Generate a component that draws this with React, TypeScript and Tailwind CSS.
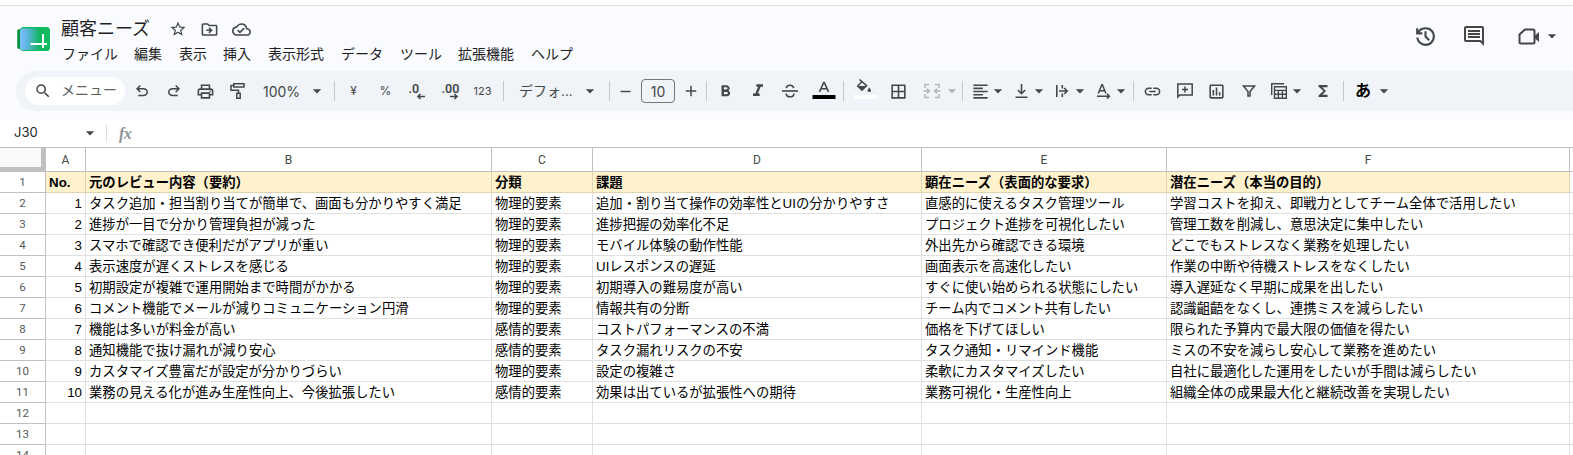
import React from "react";
import {
  MdStarBorder, MdOutlineDriveFileMove, MdOutlineCloudDone, MdOutlineComment, MdSearch,
  MdOutlinePrint, MdArrowDropDown, MdFormatBold, MdFormatItalic, MdBorderAll,
  MdFormatAlignLeft, MdLink, MdOutlineInsertChart,
  MdFunctions, MdRemove, MdAdd,
} from "react-icons/md";

const menus = [
  ["ファイル", "w-[72px]"], ["編集", "w-[45px]"], ["表示", "w-[44px]"], ["挿入", "w-[45px]"], ["表示形式", "w-[73px]"],
  ["データ", "w-[59px]"], ["ツール", "w-[58px]"], ["拡張機能", "w-[73px]"], ["ヘルプ", "w-[60px]"],
];

const columns = [
  ["A", "w-[40px]"], ["B", "w-[406px]"], ["C", "w-[101px]"], ["D", "w-[329px]"], ["E", "w-[245px]"], ["F", "w-[403px]"], ["", "w-[40px]"],
];

const rows: string[][] = [
  ["No.", "元のレビュー内容（要約）", "分類", "課題", "顕在ニーズ（表面的な要求）", "潜在ニーズ（本当の目的）"],
  ["1", "タスク追加・担当割り当てが簡単で、画面も分かりやすく満足", "物理的要素", "追加・割り当て操作の効率性とUIの分かりやすさ", "直感的に使えるタスク管理ツール", "学習コストを抑え、即戦力としてチーム全体で活用したい"],
  ["2", "進捗が一目で分かり管理負担が減った", "物理的要素", "進捗把握の効率化不足", "プロジェクト進捗を可視化したい", "管理工数を削減し、意思決定に集中したい"],
  ["3", "スマホで確認でき便利だがアプリが重い", "物理的要素", "モバイル体験の動作性能", "外出先から確認できる環境", "どこでもストレスなく業務を処理したい"],
  ["4", "表示速度が遅くストレスを感じる", "物理的要素", "UIレスポンスの遅延", "画面表示を高速化したい", "作業の中断や待機ストレスをなくしたい"],
  ["5", "初期設定が複雑で運用開始まで時間がかかる", "物理的要素", "初期導入の難易度が高い", "すぐに使い始められる状態にしたい", "導入遅延なく早期に成果を出したい"],
  ["6", "コメント機能でメールが減りコミュニケーション円滑", "物理的要素", "情報共有の分断", "チーム内でコメント共有したい", "認識齟齬をなくし、連携ミスを減らしたい"],
  ["7", "機能は多いが料金が高い", "感情的要素", "コストパフォーマンスの不満", "価格を下げてほしい", "限られた予算内で最大限の価値を得たい"],
  ["8", "通知機能で抜け漏れが減り安心", "感情的要素", "タスク漏れリスクの不安", "タスク通知・リマインド機能", "ミスの不安を減らし安心して業務を進めたい"],
  ["9", "カスタマイズ豊富だが設定が分かりづらい", "物理的要素", "設定の複雑さ", "柔軟にカスタマイズしたい", "自社に最適化した運用をしたいが手間は減らしたい"],
  ["10", "業務の見える化が進み生産性向上、今後拡張したい", "感情的要素", "効果は出ているが拡張性への期待", "業務可視化・生産性向上", "組織全体の成果最大化と継続改善を実現したい"],
  [], [], [],
];

function Slot({ w, children }: { w: string; children?: React.ReactNode }) {
  return <div className={`flex h-10 shrink-0 items-center justify-center ${w}`}>{children}</div>;
}

function Divider() {
  return <div className="h-5 w-px shrink-0 bg-[#c7c7c7]" />;
}

function Caret({ className = "" }: { className?: string }) {
  return <MdArrowDropDown size={20} className={`shrink-0 ${className}`} />;
}

function Symbol({ d, size = 18 }: { d: string; size?: number }) {
  return (
    <svg width={size} height={size} viewBox="0 -960 960 960" fill="currentColor" className="shrink-0">
      <path d={d} />
    </svg>
  );
}

const UNDO = "M280-200v-80h284q63 0 109.5-40T720-420q0-60-46.5-100T564-560H312l104 104-56 56-200-200 200-200 56 56-104 104h252q97 0 166.5 63T800-420q0 94-69.5 157T564-200H280Z";
const REDO = "M396-200q-97 0-166.5-63T160-420q0-94 69.5-157T396-640h252L544-744l56-56 200 200-200 200-56-56 104-104H396q-63 0-109.5 40T240-420q0 60 46.5 100T396-280h284v80H396Z";
const HISTORY = "M480-120q-138 0-240.5-91.5T122-440h82q14 104 92.5 172T480-200q117 0 198.5-81.5T760-480q0-117-81.5-198.5T480-760q-69 0-129 32t-101 88h110v80H120v-240h80v94q51-64 124.5-99T480-840q75 0 140.5 28.5t114 77q48.5 48.5 77 114T840-480q0 75-28.5 140.5t-77 114q-48.5 48.5-114 77T480-120Zm112-192L440-464v-216h80v184l128 128-56 56Z";

function Logo() {
  return (
    <svg width="34" height="26" viewBox="0 0 34 26" className="shrink-0">
      <defs>
        <linearGradient id="sheet" x1="0" x2="1">
          <stop offset="0" stopColor="#7cc0ff" />
          <stop offset=".25" stopColor="#62b5e6" />
          <stop offset=".75" stopColor="#12b562" />
          <stop offset="1" stopColor="#0dbc5c" />
        </linearGradient>
      </defs>
      <rect x="0.2" y="3" width="20" height="20" rx="2.5" fill="#07933f" />
      <rect x="3" y="1" width="30" height="24" rx="3.5" fill="#0ebc5f" />
      <rect x="3" y="2.5" width="26" height="21.5" rx="3" fill="url(#sheet)" />
      <path d="M13.5 18H30M26 8V22" stroke="#fff" strokeWidth="2" fill="none" />
    </svg>
  );
}

function Header() {
  return (
    <header className="flex h-[65px] pl-[17px] text-[#444746]">
      <div className="pt-5"><Logo /></div>
      <div className="flex flex-1 flex-col pl-[10px]">
        <div className="flex h-[24px] items-center pt-[22px]">
          <span className="w-[108px] whitespace-nowrap text-[18px] leading-6 text-[#1f1f1f]">顧客ニーズ</span>
          <MdStarBorder size={18} />
          <MdOutlineDriveFileMove size={19} className="ml-[13px]" />
          <MdOutlineCloudDone size={19} className="ml-[13px]" />
        </div>
        <nav className="mt-[14px] flex pl-px text-[14px] leading-5 text-[#1f1f1f]">
          {menus.map(([label, w]) => <span key={label} className={`${w} shrink-0 whitespace-nowrap`}>{label}</span>)}
        </nav>
      </div>
      <div className="flex w-[160px] items-start pt-[18px]">
        <Symbol d={HISTORY} size={25} />
        <MdOutlineComment size={24} className="ml-[24px]" />
        <div className="ml-[32px] mt-[2px] flex items-center">
          <svg width="22" height="20" viewBox="0 0 22 20">
            <path d="M7 3.5H15Q16.5 3.5 16.5 5V16Q16.5 17.5 15 17.5H3Q1.5 17.5 1.5 16V8.5Z" fill="none" stroke="currentColor" strokeWidth="2" />
            <path d="M16.5 10L21 6V16L16.5 12Z" fill="currentColor" />
          </svg>
          <Caret className="ml-[2px]" />
        </div>
      </div>
    </header>
  );
}

function Decimal({ text, right }: { text: string; right?: boolean }) {
  return (
    <svg width="20" height="18" viewBox="0 0 20 18">
      <text x="1.5" y="10.5" fontFamily="Roboto, sans-serif" fontSize="12.5" fontWeight="600" fill="currentColor">{text}</text>
      <path d={right ? "M10 14.5H17M14.5 12L17 14.5L14.5 17" : "M18 14.5H11M13.5 12L11 14.5L13.5 17"} fill="none" stroke="currentColor" strokeWidth="1.6" />
    </svg>
  );
}

function Toolbar() {
  return (
    <div className="ml-4 flex h-10 items-center rounded-l-full bg-[#f0f4f9] pl-[9px] text-[#444746]">
      <div className="flex h-7 w-[100px] shrink-0 items-center rounded-full bg-white pl-[9px]">
        <MdSearch size={18} />
        <span className="ml-[9px] pb-[2px] text-[14px] text-[#5c5f5e]">メニュー</span>
      </div>
      <Slot w="w-[34px]"><Symbol d={UNDO} /></Slot>
      <Slot w="w-[30px]"><Symbol d={REDO} /></Slot>
      <Slot w="w-[33px]"><MdOutlinePrint size={19} /></Slot>
      <Slot w="w-[31px]">
        <svg width="18" height="18" viewBox="0 0 18 18" fill="none" stroke="currentColor" strokeWidth="1.5">
          <path d="M4.8 1.8H15V5H4.8ZM4.8 3.4H2V8.3H9.5V11M7.8 11.3H11.2V16.2H7.8Z" />
        </svg>
      </Slot>
      <div className="flex w-[81px] shrink-0 items-center pl-[9px] font-['Inter'] text-[14px]">
        <span className="w-[45px] pl-px">100%</span><Caret />
      </div>
      <Divider />
      <Slot w="w-[37px]"><span className="font-['Inter'] text-[12px]">¥</span></Slot>
      <Slot w="w-[27px]"><span className="font-['Inter'] text-[12px]">%</span></Slot>
      <Slot w="w-[35px]"><Decimal text=".0" /></Slot>
      <Slot w="w-[31px]"><Decimal text=".00" right /></Slot>
      <Slot w="w-[35px]"><span className="font-['Inter'] text-[11px]">123</span></Slot>
      <div className="ml-[3px]"><Divider /></div>
      <div className="flex w-[105px] shrink-0 items-center pl-[15px] text-[14px]">
        <span className="w-[61px] shrink-0 whitespace-nowrap">デフォ...</span><Caret />
      </div>
      <Divider />
      <Slot w="w-[31px]"><MdRemove size={17} /></Slot>
      <div className="flex h-6 w-[34px] shrink-0 items-center justify-center rounded border border-[#747775] font-['Inter'] text-[14px]">10</div>
      <Slot w="w-[31px]"><MdAdd size={18} /></Slot>
      <Divider />
      <Slot w="w-[37px]"><MdFormatBold size={19} /></Slot>
      <Slot w="w-[28px]"><MdFormatItalic size={20} /></Slot>
      <Slot w="w-[36px]">
        <svg width="18" height="18" viewBox="0 0 18 18" fill="none" stroke="currentColor" strokeWidth="1.6">
          <path d="M1 9H17" />
          <path d="M12.8 6Q12 3.2 9 3.2Q5.6 3.2 5.3 6.2M5.1 11.6Q5.6 14.8 9 14.8Q12.8 14.8 12.9 11.4" />
        </svg>
      </Slot>
      <Slot w="w-[31px]">
        <svg width="24" height="24" viewBox="0 0 24 24" className="shrink-0">
          <path d="M7.5 12.8L11.7 3.5H12.3L16.5 12.8M9.2 9.8H14.8" fill="none" stroke="currentColor" strokeWidth="1.6" />
          <path d="M0.5 16H23.5V20H0.5Z" fill="#000" />
        </svg>
      </Slot>
      <div className="ml-1"><Divider /></div>
      <Slot w="w-[41px]">
        <svg width="24" height="24" viewBox="0 0 24 24">
          <path d="M6.5 0.5L13.6 6.6L9 11.2L4.7 6.9L9.3 2.3" fill="none" stroke="currentColor" strokeWidth="1.5" />
          <path d="M5 7H13.3L9 11.5ZM16.3 8.5Q18 10.5 18 11.4A1.7 1.7 0 0 1 14.6 11.4Q14.6 10.5 16.3 8.5Z" fill="currentColor" />
          <path d="M0.5 16H23.5V20H0.5Z" fill="#fff" />
        </svg>
      </Slot>
      <Slot w="w-[26px]"><MdBorderAll size={19} /></Slot>
      <div className="flex w-[51px] shrink-0 items-center pl-[12px] text-[#b2b5b8]">
        <svg width="18" height="18" viewBox="0 0 18 18" fill="none" stroke="currentColor" strokeWidth="1.5" className="shrink-0">
          <path d="M6 2.5H2V6M2 12V15.5H6M12 2.5H16V6M16 12V15.5H12M0.5 9H6M4 6.7L6.3 9L4 11.3M17.5 9H12M14 6.7L11.7 9L14 11.3" />
        </svg>
        <Caret className="ml-px" />
      </div>
      <Divider />
      <div className="flex w-[41px] shrink-0 items-center pl-2"><MdFormatAlignLeft size={19} className="shrink-0" /><Caret className="-ml-[2px]" /></div>
      <div className="flex w-[41px] shrink-0 items-center pl-2">
        <svg width="19" height="18" viewBox="0 0 19 18" fill="none" stroke="currentColor" strokeWidth="1.6" className="shrink-0"><path d="M3.5 15.2H15.5M9.5 2V11.5M5.8 8L9.5 11.7L13.2 8" /></svg>
        <Caret className="-ml-[2px]" />
      </div>
      <div className="flex w-[41px] shrink-0 items-center pl-2">
        <svg width="19" height="18" viewBox="0 0 19 18" fill="none" stroke="currentColor" strokeWidth="1.6" className="shrink-0"><path d="M3.8 3V15M9.3 3V6.5M9.3 11.5V15M6 9H14M11.2 6L14.2 9L11.2 12" /></svg>
        <Caret className="-ml-[2px]" />
      </div>
      <div className="flex w-[47px] shrink-0 items-center pl-2">
        <svg width="19" height="18" viewBox="0 0 19 18" fill="none" stroke="currentColor" strokeWidth="1.5" className="shrink-0"><path d="M4.3 11.5L7.8 2.8H8.4L11.9 11.5M5.8 8.8H10.4M3 14.2H15.2M13 11.8L15.4 14.2L13 16.6" /></svg>
        <Caret className="-ml-[2px]" />
      </div>
      <Divider />
      <Slot w="w-[37px]"><MdLink size={19} /></Slot>
      <Slot w="w-[27px]">
        <svg width="18" height="18" viewBox="0 0 18 18" fill="none" stroke="currentColor" strokeWidth="1.5"><path d="M1.8 15V2H16.2V13H3.8ZM9 4.5V10.5M6 7.5H12" /></svg>
      </Slot>
      <Slot w="w-[37px]"><MdOutlineInsertChart size={19} /></Slot>
      <Slot w="w-[27px]">
        <svg width="16" height="16" viewBox="0 0 16 16" fill="none" stroke="currentColor" strokeWidth="1.5"><path d="M2.5 3H13.5L9 8.5V13H7V8.5Z" /></svg>
      </Slot>
      <div className="flex w-[46px] shrink-0 items-center pl-2">
        <svg width="18" height="18" viewBox="0 0 18 18" fill="none" stroke="currentColor" strokeWidth="1.4" className="shrink-0"><path d="M1.7 13V1.7H14M4.5 4.7H16.3V16.3H4.5ZM4.5 8.4H16.3M4.5 12.3H16.3M8.4 8.4V16.3M12.4 8.4V16.3" /></svg>
        <Caret className="-ml-px" />
      </div>
      <Slot w="w-[30px]"><MdFunctions size={18} /></Slot>
      <div className="ml-[5px]"><Divider /></div>
      <span className="ml-[11px] text-[16px] font-bold text-black">あ</span>
      <Caret className="ml-[3px]" />
    </div>
  );
}

function Grid() {
  return (
    <div className="border-t border-[#c0c0c0]">
      <div className="flex h-6 w-[1620px]">
        <div className="h-6 w-[46px] shrink-0 border-b-5 border-r-5 border-[#c0c0c0] bg-[#f8f9fa]" />
        {columns.map(([name, w]) => (
          <div key={name} className={`${w} flex h-6 shrink-0 items-center justify-center border-b border-r border-[#c0c0c0] font-['Roboto'] text-[12px] text-[#444746]`}>{name}</div>
        ))}
      </div>
      {rows.map((row, r) => (
        <div key={r} className="flex h-[21px] w-[1620px]">
          <div className="flex w-[46px] shrink-0 items-center justify-center border-b border-r border-[#c0c0c0] font-['Roboto'] text-[11.5px] leading-5 text-[#575a5a]">{r + 1}</div>
          {columns.map(([name, w], c) => {
            const head = r === 0 && c < 6;
            return (
              <div
                key={name}
                className={`${w} shrink-0 whitespace-nowrap border-b border-r px-[3px] text-[13.333px] leading-[22px] text-black ${head ? "border-[#e0d3b0] bg-[#fff2cc] font-bold" : "border-[#e0e0e0]"} ${c === 0 && r > 0 ? "text-right" : ""}`}
              >
                {row[c]}
              </div>
            );
          })}
        </div>
      ))}
    </div>
  );
}

export default function App() {
  return (
    <div className="flex h-[455px] w-[1573px] flex-col overflow-hidden bg-white pt-[5px] font-['Liberation_Sans','Noto_Sans_CJK_JP',sans-serif]">
      <div className="h-[114px] shrink-0 border-t border-[#dfe1e5] bg-[#f9fbff]">
        <Header />
        <Toolbar />
      </div>
      <div className="flex h-[28px] shrink-0 items-center pl-[14px]">
        <span className="w-[66px] font-['Inter'] text-[13px] text-[#1f1f1f]">J30</span>
        <Caret className="text-[#444746]" />
        <div className="ml-[6px] h-[17px] w-px bg-[#dadce0]" />
        <span className="ml-3 pt-[2px] font-['Liberation_Serif'] text-[16px] font-bold italic tracking-[-0.5px] text-[#8e9296]">fx</span>
      </div>
      <Grid />
    </div>
  );
}
